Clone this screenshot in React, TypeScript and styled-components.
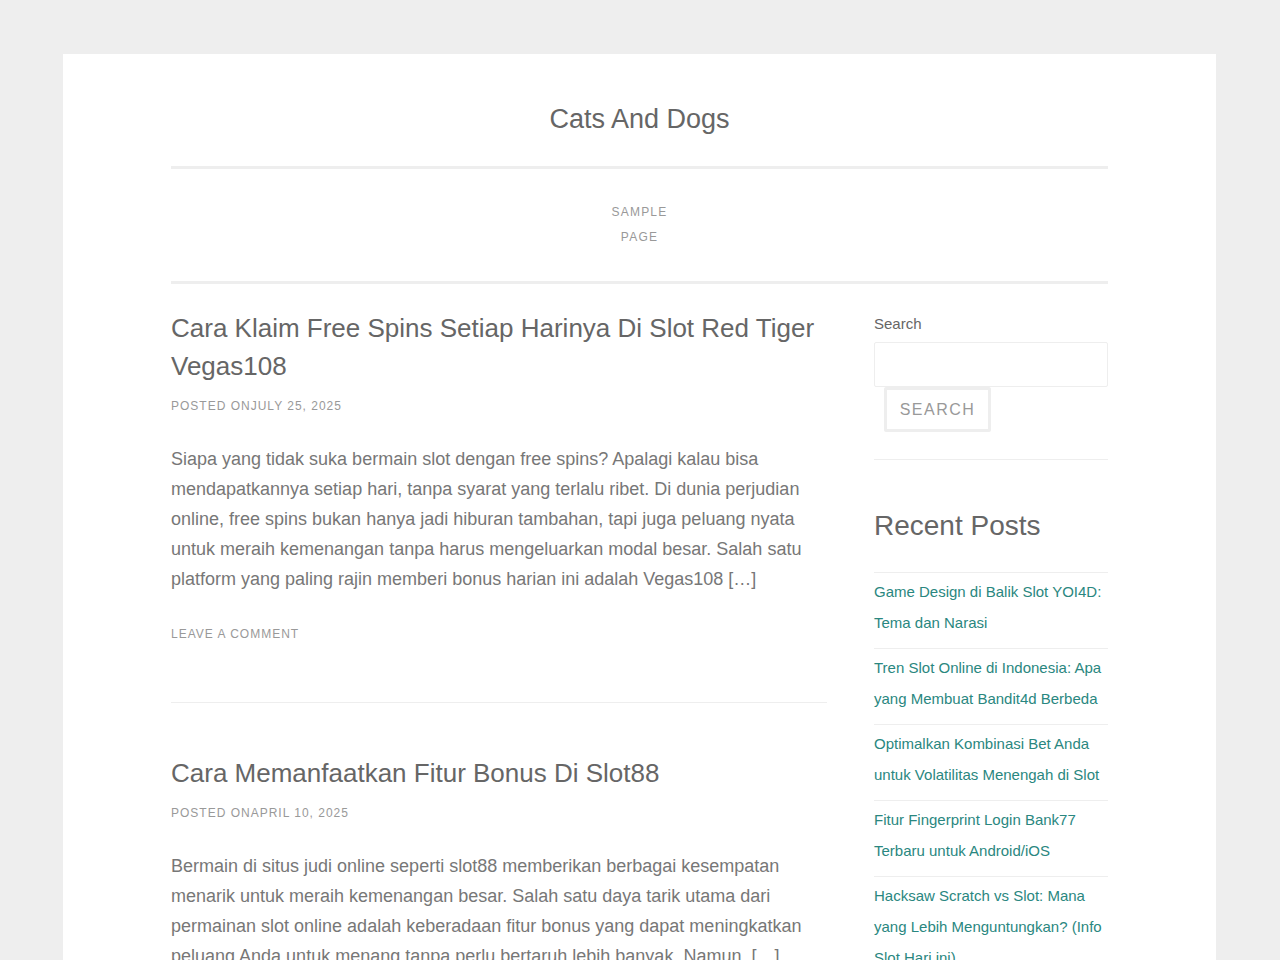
import React from "react";
import styled, { createGlobalStyle } from "styled-components";

const Global = createGlobalStyle`
  html, body { margin: 0; padding: 0; background: #eeeeee; }
  body { font-family: "Liberation Sans", Arial, Helvetica, sans-serif; color: #666; }
  * { box-sizing: border-box; }
`;

const Page = styled.div`
  width: 1153px;
  margin: 54px 0 0 63px;
  background: #fff;
  padding: 0 108px 60px;
`;

const Header = styled.header`
  padding: 47px 0 29px;
  border-bottom: 3px solid #eee;
  text-align: center;
`;

const SiteTitle = styled.h1`
  margin: 0;
  font-size: 27px;
  font-weight: 400;
  line-height: 36px;
  color: #666;
`;

const Nav = styled.nav`
  display: flex;
  justify-content: center;
  padding: 31px 0 31px;
  border-bottom: 3px solid #eee;
`;

const NavItem = styled.a`
  width: 70px;
  text-align: center;
  font-size: 12px;
  line-height: 25px;
  letter-spacing: 1.2px;
  text-transform: uppercase;
  color: #999;
  text-decoration: none;
`;

const Columns = styled.div`
  display: flex;
  gap: 47px;
  padding-top: 25px;
`;

const Main = styled.main`
  width: 656px;
  flex-shrink: 0;
`;

const Article = styled.article`
  padding-bottom: 58px;
  border-bottom: 1px solid #eee;
  margin-bottom: 51px;
`;

const PostTitle = styled.h2`
  margin: 0 0 11px;
  font-size: 26px;
  font-weight: 400;
  line-height: 38px;
  color: #666;
`;

const Meta = styled.div`
  font-size: 12px;
  letter-spacing: 1px;
  text-transform: uppercase;
  color: #999;
  line-height: 20px;
`;

const Body = styled.p`
  margin: 28px 0 30px;
  font-size: 18px;
  line-height: 30px;
  color: #777;
`;

const Sidebar = styled.aside`
  width: 234px;
  flex-shrink: 0;
`;

const Label = styled.label`
  display: block;
  font-size: 15px;
  line-height: 20px;
  color: #666;
  margin-top: 5px;
  margin-bottom: 8px;
`;

const Input = styled.input`
  display: block;
  width: 234px;
  height: 45px;
  border: 1px solid #eee;
  border-radius: 2px;
  background: #fff;
  outline: none;
`;

const Button = styled.button`
  display: block;
  margin-left: 10px;
  width: 107px;
  height: 45px;
  border: 3px solid #eee;
  border-radius: 2px;
  background: #fff;
  font-family: inherit;
  font-size: 16px;
  letter-spacing: 1.5px;
  color: #999;
  text-transform: uppercase;
`;

const Widget = styled.section`
  border-bottom: 1px solid #eee;
  padding-bottom: 27px;
  margin-bottom: 46px;
`;

const WidgetTitle = styled.h2`
  margin: 0 0 26px;
  font-size: 28px;
  font-weight: 400;
  line-height: 40px;
  color: #666;
`;

const List = styled.ul`
  list-style: none;
  margin: 0;
  padding: 0;
`;

const Item = styled.li`
  border-top: 1px solid #eee;
  padding: 3px 0 10px;
  font-size: 15px;
  line-height: 31px;
  a { color: #2a8780; text-decoration: none; }
`;

const posts = [
  {
    title: "Cara Klaim Free Spins Setiap Harinya Di Slot Red Tiger Vegas108",
    date: "July 25, 2025",
    body:
      "Siapa yang tidak suka bermain slot dengan free spins? Apalagi kalau bisa mendapatkannya setiap hari, tanpa syarat yang terlalu ribet. Di dunia perjudian online, free spins bukan hanya jadi hiburan tambahan, tapi juga peluang nyata untuk meraih kemenangan tanpa harus mengeluarkan modal besar. Salah satu platform yang paling rajin memberi bonus harian ini adalah Vegas108 […]",
  },
  {
    title: "Cara Memanfaatkan Fitur Bonus Di Slot88",
    date: "April 10, 2025",
    body:
      "Bermain di situs judi online seperti slot88 memberikan berbagai kesempatan menarik untuk meraih kemenangan besar. Salah satu daya tarik utama dari permainan slot online adalah keberadaan fitur bonus yang dapat meningkatkan peluang Anda untuk menang tanpa perlu bertaruh lebih banyak. Namun, […]",
  },
];

const recent = [
  "Game Design di Balik Slot YOI4D: Tema dan Narasi",
  "Tren Slot Online di Indonesia: Apa yang Membuat Bandit4d Berbeda",
  "Optimalkan Kombinasi Bet Anda untuk Volatilitas Menengah di Slot",
  "Fitur Fingerprint Login Bank77 Terbaru untuk Android/iOS",
  "Hacksaw Scratch vs Slot: Mana yang Lebih Menguntungkan? (Info Slot Hari ini)",
];

export default function App() {
  return (
    <>
      <Global />
      <Page>
        <Header>
          <SiteTitle>Cats And Dogs</SiteTitle>
        </Header>
        <Nav>
          <NavItem href="#">Sample Page</NavItem>
        </Nav>
        <Columns>
          <Main>
            {posts.map((p) => (
              <Article key={p.title}>
                <PostTitle>{p.title}</PostTitle>
                <Meta>Posted on{p.date}</Meta>
                <Body>{p.body}</Body>
                <Meta>Leave a comment</Meta>
              </Article>
            ))}
          </Main>
          <Sidebar>
            <Widget>
              <Label>Search</Label>
              <Input type="search" />
              <Button>Search</Button>
            </Widget>
            <WidgetTitle>Recent Posts</WidgetTitle>
            <List>
              {recent.map((r) => (
                <Item key={r}>
                  <a href="#">{r}</a>
                </Item>
              ))}
            </List>
          </Sidebar>
        </Columns>
      </Page>
    </>
  );
}
